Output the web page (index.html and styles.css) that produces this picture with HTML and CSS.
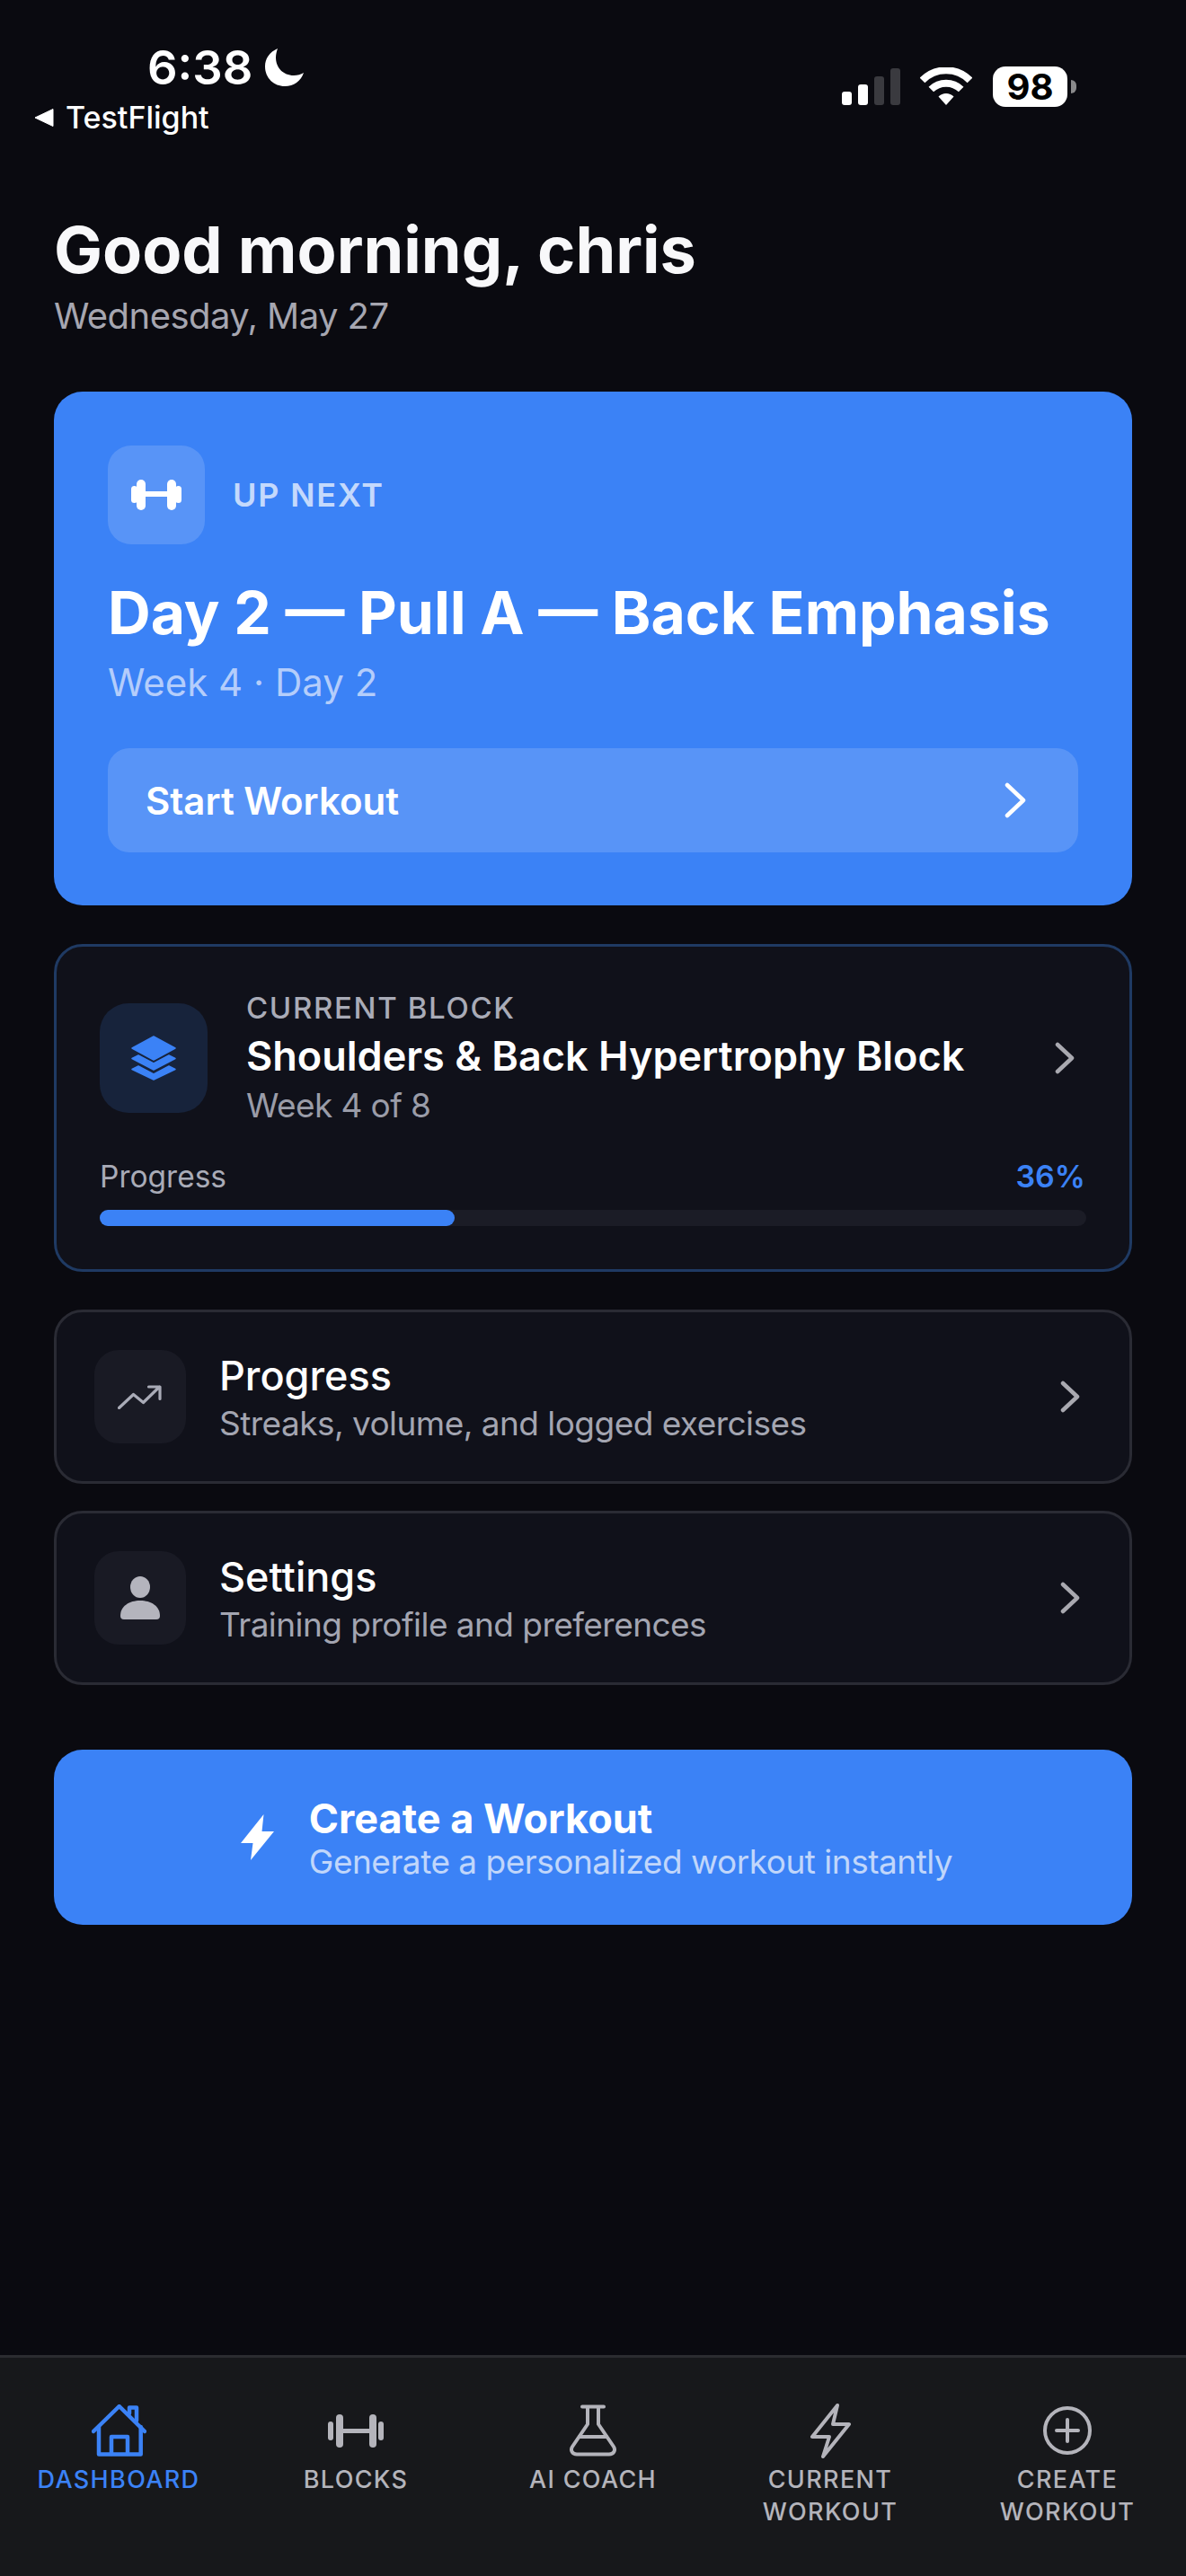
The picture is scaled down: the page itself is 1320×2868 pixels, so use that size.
FILE: index.html
```html
<!DOCTYPE html>
<html lang="en">
<head>
  <meta charset="UTF-8" />
  <meta name="viewport" content="width=device-width, initial-scale=1" />
  <title>Dashboard</title>
  <link rel="stylesheet" href="styles.css">
</head>
<body>
  <div class="status">
    <div class="status-left">
      <div class="clock">
        <span class="time">6:38</span>
        <svg class="moon" viewBox="0 0 43 42"><path d="M14 0C5 4 0 11 0 20c0 13 10 22 22 22 10 0 18-6 21-15-3 2-7 3-11 3C20 30 12 21 12 10c0-4 1-7 2-10z" fill="#fff"/></svg>
      </div>
      <div class="back">
        <svg class="back-arrow" viewBox="0 0 22 22"><path d="M21 1.500V20.500L1 11z" fill="#fff" stroke="#fff" stroke-linejoin="round"/></svg>
        <span>TestFlight</span>
      </div>
    </div>
    <div class="status-right">
      <div class="signal">
        <span class="bar bar-1"></span>
        <span class="bar bar-2"></span>
        <span class="bar bar-3"></span>
        <span class="bar bar-4"></span>
      </div>
      <svg class="wifi" viewBox="0 0 58 42">
        <path d="M2.500 14.500A37 37 0 0 1 55.500 14.500" fill="none" stroke="#fff" stroke-width="8"/>
        <path d="M12.300 24.500A24 24 0 0 1 45.700 24.500" fill="none" stroke="#fff" stroke-width="8"/>
        <path d="M20.500 32.500A12 12 0 0 1 37.500 32.500L29 42z" fill="#fff"/>
      </svg>
      <div class="battery"><span class="battery-level">98</span></div>
      <span class="battery-nub"></span>
    </div>
  </div>

  <main class="content">
    <h1 class="greeting">Good morning, chris</h1>
    <p class="date">Wednesday, May 27</p>

    <section class="hero">
      <div class="hero-top">
        <div class="hero-icon">
          <svg class="hero-dumbbell" viewBox="0 0 56 34" fill="#fff">
            <rect x="0" y="7" width="7" height="19" rx="3.500"/>
            <rect x="6" y="0" width="10" height="34" rx="5"/>
            <rect x="15" y="13" width="26" height="6"/>
            <rect x="40" y="0" width="10" height="34" rx="5"/>
            <rect x="49" y="7" width="7" height="19" rx="3.500"/>
          </svg>
        </div>
        <span class="hero-label">UP NEXT</span>
      </div>
      <h2 class="hero-title">Day 2 — Pull A — Back Emphasis</h2>
      <p class="hero-sub">Week 4 · Day 2</p>
      <div class="start-btn">
        <span>Start Workout</span>
        <svg class="start-chevron" viewBox="0 0 24 40"><path d="M3 3l18 17L3 37" fill="none" stroke="#fff" stroke-width="4.500" stroke-linecap="round" stroke-linejoin="round"/></svg>
      </div>
    </section>

    <section class="block-card">
      <div class="block-top">
        <div class="block-icon">
          <svg class="layers" viewBox="0 0 50 50" fill="#3b82f6" stroke="#3b82f6" stroke-width="1.500" stroke-linejoin="round">
            <path d="M1 37.500L25 49L49 37.500L42 34L25 43L8 34z"/>
            <path d="M1 25.500L25 38L49 25.500L42 22L25 31L8 22z"/>
            <path d="M25 1L49 14L25 27L1 14z"/>
          </svg>
        </div>
        <div class="block-text">
          <div class="block-label">CURRENT BLOCK</div>
          <div class="block-title">Shoulders &amp; Back Hypertrophy Block</div>
          <div class="block-sub">Week 4 of 8</div>
        </div>
        <svg class="chevron block-chevron" viewBox="0 0 22 36"><path d="M3 3l16 15L3 33" fill="none" stroke="#a9a9b0" stroke-width="4.500" stroke-linecap="round" stroke-linejoin="round"/></svg>
      </div>
      <div class="progress-head">
        <span class="progress-label">Progress</span>
        <span class="progress-value">36%</span>
      </div>
      <div class="progress-track"><div class="progress-fill" style="width: 36%"></div></div>
    </section>

    <div class="link-card first">
      <div class="link-icon">
        <svg class="trend" viewBox="0 0 50 27"><path d="M1.500 25.500L17.500 10.500L28.500 19.500L46.500 2M34.500 2H47V15.500" fill="none" stroke="#a9abb7" stroke-width="3.200" stroke-linecap="round" stroke-linejoin="round"/></svg>
      </div>
      <div class="link-text">
        <div class="link-title">Progress</div>
        <div class="link-sub">Streaks, volume, and logged exercises</div>
      </div>
      <svg class="chevron" viewBox="0 0 22 36"><path d="M3 3l16 15L3 33" fill="none" stroke="#a9a9b0" stroke-width="4.500" stroke-linecap="round" stroke-linejoin="round"/></svg>
    </div>

    <div class="link-card">
      <div class="link-icon">
        <svg class="person" viewBox="0 0 44 48" fill="#b4b4bd">
          <ellipse cx="22" cy="12" rx="11" ry="12"/>
          <path d="M0 44C0 33 10 27 22 27C34 27 44 33 44 44Q44 48 40 48H4Q0 48 0 44z"/>
        </svg>
      </div>
      <div class="link-text">
        <div class="link-title">Settings</div>
        <div class="link-sub">Training profile and preferences</div>
      </div>
      <svg class="chevron" viewBox="0 0 22 36"><path d="M3 3l16 15L3 33" fill="none" stroke="#a9a9b0" stroke-width="4.500" stroke-linecap="round" stroke-linejoin="round"/></svg>
    </div>

    <div class="create-btn">
      <svg class="create-bolt" viewBox="0 0 37 51"><path d="M25.500 0L0 32H13.500L11 51L37 19H23.500z" fill="#fff"/></svg>
      <div class="create-text">
        <div class="create-title">Create a Workout</div>
        <div class="create-sub">Generate a personalized workout instantly</div>
      </div>
    </div>
  </main>

  <nav class="tabbar">
    <div class="tab active">
      <div class="tab-icon">
        <svg class="tab-svg home" viewBox="0 0 61 58" fill="none" stroke="#3b82f6" stroke-width="4.500" stroke-linecap="round" stroke-linejoin="round">
          <path d="M2 30L30.700 2L59 30"/>
          <path d="M8 25V55.500H54.700V25"/>
          <path d="M22 55V36H40V55"/>
          <path d="M42 10V3.500H50V18"/>
        </svg>
      </div>
      <span class="tab-label">DASHBOARD</span>
    </div>
    <div class="tab">
      <div class="tab-icon">
        <svg class="tab-svg dumbbell" viewBox="0 0 62 37" fill="#b4b4bb">
          <rect x="0" y="8" width="6" height="21" rx="3"/>
          <rect x="9" y="0" width="8" height="37" rx="4"/>
          <rect x="16" y="16" width="30" height="5"/>
          <rect x="46" y="0" width="8" height="37" rx="4"/>
          <rect x="56" y="8" width="6" height="21" rx="3"/>
        </svg>
      </div>
      <span class="tab-label">BLOCKS</span>
    </div>
    <div class="tab">
      <div class="tab-icon">
        <svg class="tab-svg flask" viewBox="0 0 54 58" fill="none" stroke="#b4b4bb" stroke-width="4" stroke-linecap="round" stroke-linejoin="round">
          <path d="M15 2.500H39"/>
          <path d="M21 3V22L4 47C1.500 51 4 55.500 9 55.500H45C50 55.500 52.500 51 50 47L33 22V3"/>
          <path d="M12 36H42"/>
        </svg>
      </div>
      <span class="tab-label">AI COACH</span>
    </div>
    <div class="tab">
      <div class="tab-icon">
        <svg class="tab-svg bolt" viewBox="0 0 45 61" fill="none" stroke="#b4b4bb" stroke-width="4" stroke-linejoin="round">
          <path d="M30 2L2 37H21L14 59L43 23H25z"/>
        </svg>
      </div>
      <span class="tab-label">CURRENT WORKOUT</span>
    </div>
    <div class="tab">
      <div class="tab-icon">
        <svg class="tab-svg plus" viewBox="0 0 54 54" fill="none" stroke="#b4b4bb" stroke-width="4" stroke-linecap="round">
          <circle cx="27" cy="27" r="25"/>
          <path d="M15 27H39M27 15V39"/>
        </svg>
      </div>
      <span class="tab-label">CREATE WORKOUT</span>
    </div>
  </nav>
</body>
</html>
```

FILE: styles.css
```css
* {
  box-sizing: border-box;
}
body {
  margin: 0;
  width: 1320px;
  height: 2868px;
  background: #0a0a10;
  color: #fff;
  font-family: Inter, "Noto Sans", sans-serif;
  display: flex;
  flex-direction: column;
  overflow: hidden;
}
h1, h2, p {
  margin: 0;
}

/* status bar */
.status {
  display: flex;
  justify-content: space-between;
  align-items: flex-start;
  padding: 45px 122px 0 38px;
}
.clock {
  display: flex;
  align-items: center;
  padding-left: 126px;
  height: 60px;
}
.time {
  font-size: 52.500px;
  font-weight: 600;
  line-height: 60px;
}
.moon {
  width: 43px;
  height: 42px;
  margin-left: 14px;
}
.back {
  display: flex;
  align-items: center;
  margin-top: 6px;
  font-size: 34px;
  font-weight: 500;
  line-height: 40px;
}
.back-arrow {
  width: 22px;
  height: 22px;
  margin-right: 13px;
}
.status-right {
  display: flex;
  align-items: flex-start;
  margin-top: 29px;
}
.signal {
  display: flex;
  align-items: flex-end;
  gap: 7px;
  height: 41px;
  margin-top: 2px;
}
.bar {
  width: 11px;
  border-radius: 3px;
  background: #fff;
}
.bar-1 { height: 15px; }
.bar-2 { height: 23px; }
.bar-3 { height: 32px; background: #3a3a3f; }
.bar-4 { height: 41px; background: #3a3a3f; }
.wifi {
  width: 58px;
  height: 42px;
  margin: 1px 0 0 22px;
}
.battery {
  width: 83px;
  height: 45px;
  margin-left: 23px;
  border-radius: 14px;
  background: #fff;
  display: flex;
  align-items: center;
  justify-content: center;
}
.battery-level {
  color: #000;
  font-size: 40px;
  font-weight: 700;
  line-height: 45px;
}
.battery-nub {
  width: 6px;
  height: 15px;
  margin: 15px 0 0 4px;
  border-radius: 0 6px 6px 0;
  background: #8a8a8c;
}

/* main column */
.content {
  padding: 0 60px;
}
.greeting {
  margin-top: 83px;
  font-size: 72px;
  font-weight: 700;
  line-height: 88px;
  color: #f8f8fa;
}
.date {
  margin-top: 5px;
  font-size: 40px;
  line-height: 50px;
  letter-spacing: -0.55px;
  color: #a6a6b0;
}

.hero {
  margin-top: 59px;
  padding: 60px;
  height: 572px;
  border-radius: 32px;
  background: #3b82f6;
}
.hero-top {
  display: flex;
  align-items: center;
  gap: 31px;
}
.hero-icon {
  width: 108px;
  height: 110px;
  border-radius: 26px;
  background: rgba(255, 255, 255, 0.15);
  display: flex;
  align-items: center;
  justify-content: center;
}
.hero-dumbbell {
  width: 56px;
  height: 34px;
}
.hero-label {
  font-size: 36px;
  font-weight: 600;
  letter-spacing: 0.05em;
  color: #c4d9fc;
}
.hero-title {
  margin-top: 36px;
  font-size: 66px;
  font-weight: 700;
  line-height: 80px;
}
.hero-sub {
  margin-top: 12px;
  font-size: 42px;
  line-height: 52px;
  color: #b4cdfb;
}
.start-btn {
  margin-top: 47px;
  height: 116px;
  padding: 0 58px 0 42px;
  border-radius: 24px;
  background: rgba(255, 255, 255, 0.15);
  display: flex;
  align-items: center;
  justify-content: space-between;
  font-size: 42px;
  font-weight: 600;
}
.start-chevron {
  width: 24px;
  height: 40px;
}

/* current block */
.block-card {
  margin-top: 43px;
  height: 365px;
  padding: 46px 48px 0;
  border: 3px solid #1f3a63;
  border-radius: 32px;
  background: #10111a;
}
.block-top {
  display: flex;
  align-items: center;
}
.block-icon {
  width: 120px;
  height: 122px;
  margin-right: 43px;
  flex-shrink: 0;
  border-radius: 32px;
  background: #17233b;
  display: flex;
  align-items: center;
  justify-content: center;
}
.layers {
  width: 50px;
  height: 50px;
}
.block-text {
  flex: 1;
  padding-top: 1px;
}
.block-label {
  font-size: 33px;
  font-weight: 500;
  line-height: 42px;
  letter-spacing: 0.05em;
  color: #a9abb7;
}
.block-title {
  margin-top: 5px;
  font-size: 45px;
  font-weight: 600;
  line-height: 56px;
}
.block-sub {
  margin-top: 2px;
  font-size: 37px;
  line-height: 50px;
  letter-spacing: -0.6px;
  color: #9a9ca8;
}
.chevron {
  width: 22px;
  height: 36px;
  flex-shrink: 0;
}
.block-chevron {
  margin-right: 13px;
}
.progress-head {
  display: flex;
  justify-content: space-between;
  margin-top: 32px;
  padding-right: 1px;
  font-size: 33.500px;
  line-height: 44px;
}
.progress-label {
  color: #a9abb7;
}
.progress-value {
  font-size: 34px;
  font-weight: 600;
  color: #3b82f6;
}
.progress-track {
  margin-top: 15px;
  height: 18px;
  border-radius: 9px;
  background: #1b1c26;
}
.progress-fill {
  height: 100%;
  border-radius: 9px;
  background: #3b82f6;
}

/* link cards */
.link-card {
  margin-top: 30px;
  height: 194px;
  padding: 0 55px 0 42px;
  border: 3px solid #2a2b34;
  border-radius: 32px;
  background: #10111a;
  display: flex;
  align-items: center;
}
.link-card.first {
  margin-top: 42px;
}
.link-icon {
  width: 102px;
  height: 104px;
  margin-right: 37px;
  flex-shrink: 0;
  border-radius: 27px;
  background: #191a24;
  display: flex;
  align-items: center;
  justify-content: center;
}
.trend {
  width: 50px;
  height: 27px;
}
.person {
  width: 44px;
  height: 48px;
}
.link-text {
  flex: 1;
  margin-top: 4px;
}
.link-title {
  font-size: 45px;
  font-weight: 500;
  line-height: 54px;
}
.link-sub {
  margin-top: 1px;
  font-size: 37px;
  line-height: 50px;
  letter-spacing: -0.54px;
  color: #a3a5b1;
}

/* create button */
.create-btn {
  margin-top: 72px;
  height: 195px;
  border-radius: 32px;
  background: #3b82f6;
  display: flex;
  align-items: center;
  justify-content: center;
  gap: 39px;
  padding-left: 8px;
}
.create-bolt {
  width: 37px;
  height: 51px;
}
.create-text {
  margin-top: 4px;
}
.create-title {
  font-size: 45px;
  font-weight: 700;
  line-height: 50px;
}
.create-sub {
  font-size: 37px;
  line-height: 46px;
  letter-spacing: -0.5px;
  color: #c0d6fb;
}

/* tab bar */
.tabbar {
  margin-top: auto;
  height: 246px;
  border-top: 3px solid #2b2c30;
  background: #17181b;
  display: grid;
  grid-template-columns: repeat(5, 1fr);
}
.tab {
  padding-top: 49px;
  display: flex;
  flex-direction: column;
  align-items: center;
  color: #b4b4bb;
}
.tab.active {
  color: #3b82f6;
}
.tab-icon {
  height: 64px;
  display: flex;
  align-items: center;
  justify-content: center;
}
.tab-svg.home { width: 61px; height: 58px; }
.tab-svg.dumbbell { width: 62px; height: 37px; }
.tab-svg.flask { width: 54px; height: 58px; }
.tab-svg.bolt { width: 45px; height: 61px; }
.tab-svg.plus { width: 54px; height: 54px; }
.tab-label {
  width: 200px;
  margin-top: 5px;
  font-size: 27px;
  font-weight: 500;
  line-height: 36px;
  letter-spacing: 0.05em;
  text-align: center;
}
```
